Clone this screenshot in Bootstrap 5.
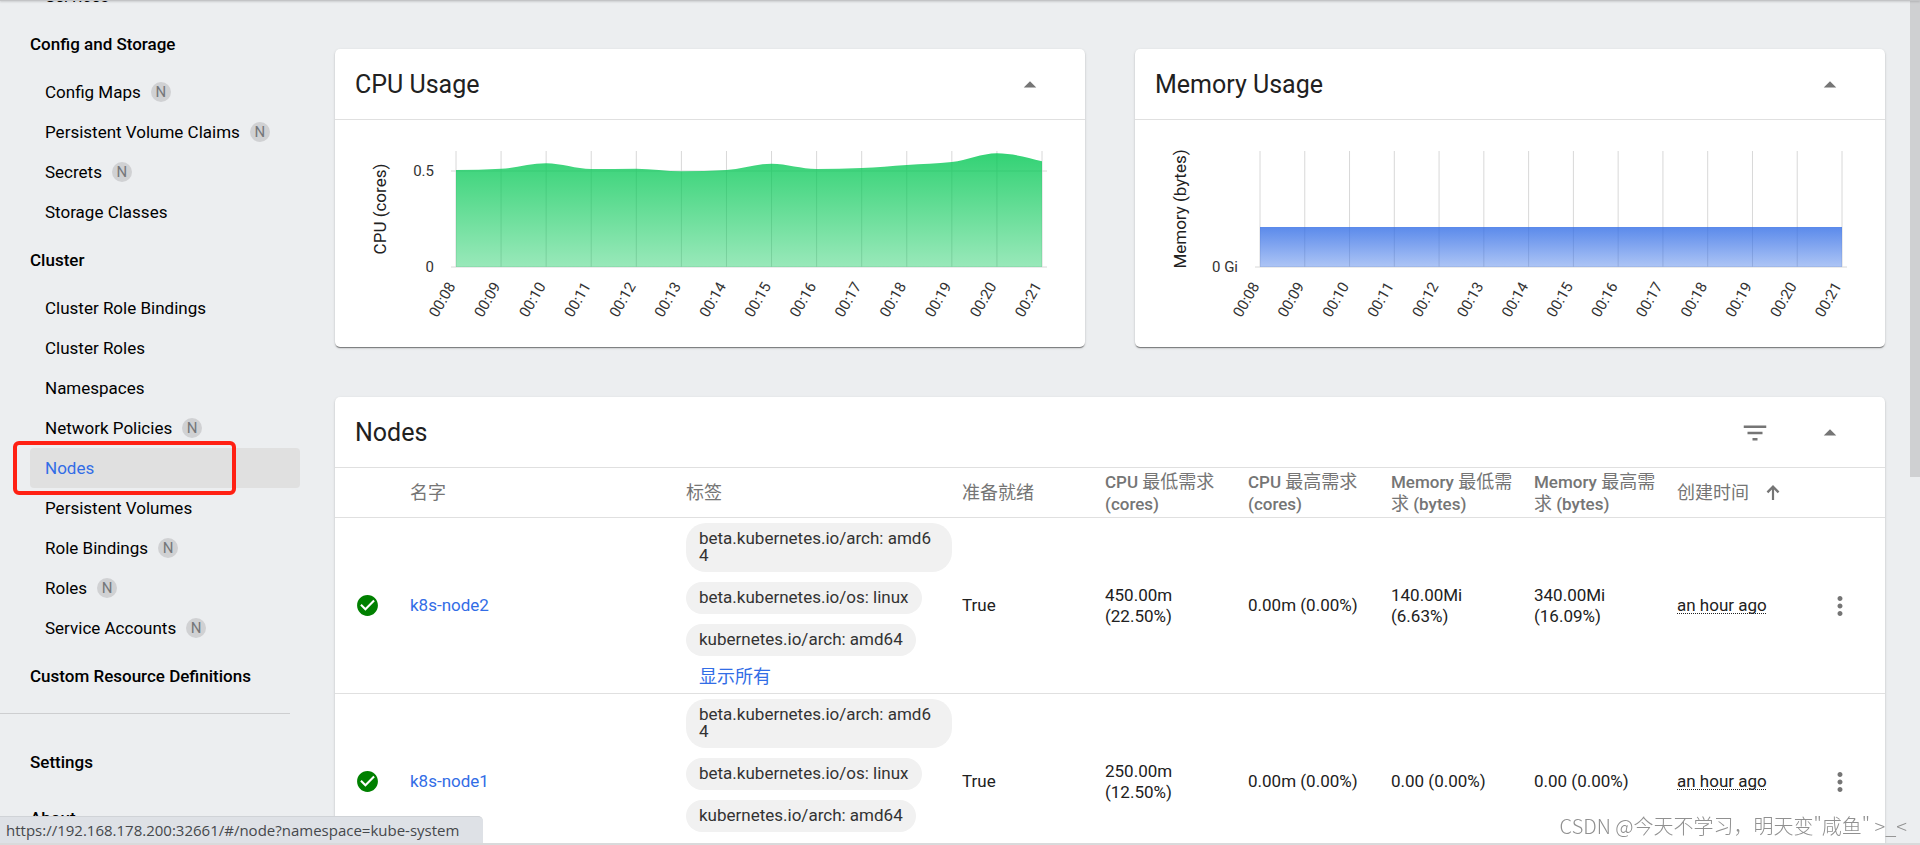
<!DOCTYPE html>
<html lang="zh-CN">
<head>
<meta charset="utf-8">
<meta name="viewport" content="width=device-width, initial-scale=1">
<title>Nodes - Kubernetes Dashboard</title>
<link rel="stylesheet" href="https://cdn.jsdelivr.net/npm/bootstrap@5.3.0/dist/css/bootstrap.min.css">
<style>
  body { background: #eceef0; color: #212121; font: 400 18px/21px Roboto, "Noto Sans CJK SC", sans-serif; }
  a { color: #326de6; text-decoration: none; }
  .toolbar-edge { height: 1px; background: #c3c4c6; box-shadow: 0 1px 2px rgba(0,0,0,.2); z-index: 3; }

  .sidenav { width: 300px; }
  .sidenav-scroll { margin-top: -24px; }
  .side-item { height: 40px; margin-left: 30px; padding-left: 15px; border-radius: 4px; color: #000; font-size: 17px; }
  .side-item.current { background: #e0e0e0; color: #326de6; }
  .side-head { height: 56px; padding: 1px 0 0 30px; color: #000; font-size: 17px; font-weight: 500; }
  .ns-mark { width: 20px; height: 20px; margin-left: 10px; border-radius: 50%; background: #d0d1d3; color: #75777a; font-size: 15px; line-height: 20px; text-align: center; }
  .side-rule { height: 1px; margin: 9px 10px 20px 0; background: #cdced0; }
  .highlight { left: -17px; top: -7px; width: 223px; height: 54px; border: 4px solid #ff2013; border-radius: 6px; }

  .content { padding: 49px 25px 0 35px; min-width: 0; }
  .panel { background: #fff; border-radius: 5px; box-shadow: 0 2px 1px -1px rgba(0,0,0,.3), 0 1px 1px rgba(0,0,0,.2), 0 1px 3px rgba(0,0,0,.14); }
  .panel-head { height: 71px; padding: 2px 40px 0 20px; border-bottom: 1px solid #e0e0e0; gap: 45px; }
  .panel-head h2 { margin: 0; font-size: 25px; line-height: 30px; font-weight: 400; color: #212121; }
  .charts { gap: 50px; margin-bottom: 50px; }
  .charts svg { width: 100%; height: auto; }
  .charts .icon-btn svg { width: 30px; }
  .charts text { fill: #333; font-size: 15px; }
  .charts .axis-title { fill: #212121; font-size: 17px; }
  .icon-btn { width: 30px; height: 30px; padding: 0; border: 0; background: none; color: #757575; }
  .icon-btn svg, .th-arrow { display: block; fill: currentColor; }

  .grid-table tr { display: grid; grid-template-columns: 75px 276fr 276fr repeat(6, 143fr) 65px; border-bottom: 1px solid #e0e0e0; }
  .grid-table th, .grid-table td { display: flex; align-items: center; padding: 0 10px 0 0; min-width: 0; font-size: 17px; }
  .grid-table td { padding-right: 14px; }
  .grid-table thead tr { height: 50px; }
  .grid-table th { color: #757575; font-weight: 500; line-height: 22px; }
  .grid-table .first { padding-left: 20px; }
  .grid-table .last { padding: 0 0 0 5px; }
  .grid-table .tags { padding: 5px 10px 5px 0; }
  .tag-list { gap: 10px; }
  .tag { padding: 7px 13px 8px; border-radius: 20px; background: #f1f1f1; color: #333; line-height: 17px; word-break: break-all; }
  .tag-more { padding: 0 13px; line-height: 22px; }
  .grid-table .zh { font-size: 18px; font-weight: 400; }
  .ago { text-decoration: underline dotted 1px; text-underline-offset: 2px; text-decoration-skip-ink: none; }

  .scroll-track { width: 10px; }
  .scroll-thumb { height: 477px; background: #cfd0d2; }
  .status { left: 0; bottom: 2px; height: 27px; padding: 0 24px 0 6px; background: #dee1e6; border-top: 1px solid #d0d3d7; border-radius: 0 5px 0 0; color: #45484c; font: 15px/26px "Open Sans", sans-serif; z-index: 5; }
  .bottom-edge { height: 2px; background: #d9dadb; z-index: 4; }
  .watermark { right: 13px; bottom: 5px; color: #909090; font: 300 20px/28px "Noto Sans CJK SC", sans-serif; z-index: 4; }
</style>
</head>
<body class="vh-100 overflow-hidden d-flex">
<div class="toolbar-edge fixed-top"></div>

<nav class="sidenav flex-shrink-0 overflow-hidden" aria-label="Resources">
  <div class="sidenav-scroll">
    <a href="#" class="side-item d-flex align-items-center">Services</a>
    <a href="#" class="side-head d-flex align-items-center">Config and Storage</a>
    <a href="#" class="side-item d-flex align-items-center">Config Maps<span class="ns-mark">N</span></a>
    <a href="#" class="side-item d-flex align-items-center">Persistent Volume Claims<span class="ns-mark">N</span></a>
    <a href="#" class="side-item d-flex align-items-center">Secrets<span class="ns-mark">N</span></a>
    <a href="#" class="side-item d-flex align-items-center">Storage Classes</a>
    <a href="#" class="side-head d-flex align-items-center">Cluster</a>
    <a href="#" class="side-item d-flex align-items-center">Cluster Role Bindings</a>
    <a href="#" class="side-item d-flex align-items-center">Cluster Roles</a>
    <a href="#" class="side-item d-flex align-items-center">Namespaces</a>
    <a href="#" class="side-item d-flex align-items-center">Network Policies<span class="ns-mark">N</span></a>
    <a href="#" class="side-item current position-relative d-flex align-items-center" aria-current="page">Nodes<span class="highlight position-absolute"></span></a>
    <a href="#" class="side-item d-flex align-items-center">Persistent Volumes</a>
    <a href="#" class="side-item d-flex align-items-center">Role Bindings<span class="ns-mark">N</span></a>
    <a href="#" class="side-item d-flex align-items-center">Roles<span class="ns-mark">N</span></a>
    <a href="#" class="side-item d-flex align-items-center">Service Accounts<span class="ns-mark">N</span></a>
    <a href="#" class="side-head d-flex align-items-center">Custom Resource Definitions</a>
    <div class="side-rule"></div>
    <a href="#" class="side-head d-flex align-items-center">Settings</a>
    <a href="#" class="side-head d-flex align-items-center">About</a>
  </div>
</nav>

<main class="content flex-grow-1">
  <div class="charts d-flex">
    <section class="panel col">
      <header class="panel-head d-flex align-items-center justify-content-between">
        <h2>CPU Usage</h2>
        <button class="icon-btn" aria-label="Collapse"><svg width="30" height="30" viewBox="0 0 24 24"><path d="M7 14l5-5 5 5z"/></svg></button>
      </header>
      <svg class="d-block" id="cpu-chart" viewBox="0 0 750 227" role="img" aria-label="CPU usage"></svg>
    </section>
    <section class="panel col">
      <header class="panel-head d-flex align-items-center justify-content-between">
        <h2>Memory Usage</h2>
        <button class="icon-btn" aria-label="Collapse"><svg width="30" height="30" viewBox="0 0 24 24"><path d="M7 14l5-5 5 5z"/></svg></button>
      </header>
      <svg class="d-block" id="mem-chart" viewBox="0 0 750 227" role="img" aria-label="Memory usage"></svg>
    </section>
  </div>

  <section class="panel">
    <header class="panel-head d-flex align-items-center">
      <h2 class="me-auto">Nodes</h2>
      <button class="icon-btn" aria-label="Filter"><svg width="30" height="30" viewBox="0 0 24 24"><path d="M10 18h4v-2h-4v2zM3 6v2h18V6H3zm3 7h12v-2H6v2z"/></svg></button>
      <button class="icon-btn" aria-label="Collapse"><svg width="30" height="30" viewBox="0 0 24 24"><path d="M7 14l5-5 5 5z"/></svg></button>
    </header>
    <table class="grid-table d-block w-100">
      <thead class="d-block">
        <tr>
          <th></th>
          <th class="zh">名字</th>
          <th class="zh">标签</th>
          <th class="zh">准备就绪</th>
          <th><div>CPU <span class="zh">最低需求</span> (cores)</div></th>
          <th><div>CPU <span class="zh">最高需求</span> (cores)</div></th>
          <th><div>Memory <span class="zh">最低需求</span> (bytes)</div></th>
          <th><div>Memory <span class="zh">最高需求</span> (bytes)</div></th>
          <th class="zh">创建时间<svg class="th-arrow ms-3" width="16" height="18" viewBox="0 0 16 18"><path d="M6.900 16V5.600L3.300 9.200 1.600 7.500 8 1l6.400 6.500-1.700 1.700-3.600-3.600V16z"/></svg></th>
          <th></th>
        </tr>
      </thead>
      <tbody class="d-block">
        <tr>
          <td class="first"><svg width="25" height="25" viewBox="0 0 24 24" fill="#008000"><path d="M12 2C6.48 2 2 6.48 2 12s4.480 10 10 10 10-4.480 10-10S17.520 2 12 2zm-2 15l-5-5 1.410-1.410L10 14.170l7.590-7.590L19 8l-9 9z"/></svg></td>
          <td><a href="#">k8s-node2</a></td>
          <td class="tags"><div class="tag-list d-flex flex-column align-items-start">
            <span class="tag">beta.kubernetes.io/arch: amd64</span>
            <span class="tag">beta.kubernetes.io/os: linux</span>
            <span class="tag">kubernetes.io/arch: amd64</span>
            <a href="#" class="tag-more zh">显示所有</a>
          </div></td>
          <td>True</td>
          <td>450.00m (22.50%)</td>
          <td>0.00m (0.00%)</td>
          <td>140.00Mi (6.63%)</td>
          <td>340.00Mi (16.09%)</td>
          <td><span class="ago">an hour ago</span></td>
          <td class="last"><button class="icon-btn" aria-label="More"><svg width="30" height="30" viewBox="0 0 24 24"><path d="M12 8c1.100 0 2-.9 2-2s-.9-2-2-2-2 .9-2 2 .9 2 2 2zm0 2c-1.100 0-2 .9-2 2s.9 2 2 2 2-.9 2-2-.9-2-2-2zm0 6c-1.100 0-2 .9-2 2s.9 2 2 2 2-.9 2-2-.9-2-2-2z"/></svg></button></td>
        </tr>
        <tr>
          <td class="first"><svg width="25" height="25" viewBox="0 0 24 24" fill="#008000"><path d="M12 2C6.48 2 2 6.48 2 12s4.480 10 10 10 10-4.480 10-10S17.520 2 12 2zm-2 15l-5-5 1.410-1.410L10 14.170l7.590-7.590L19 8l-9 9z"/></svg></td>
          <td><a href="#">k8s-node1</a></td>
          <td class="tags"><div class="tag-list d-flex flex-column align-items-start">
            <span class="tag">beta.kubernetes.io/arch: amd64</span>
            <span class="tag">beta.kubernetes.io/os: linux</span>
            <span class="tag">kubernetes.io/arch: amd64</span>
            <a href="#" class="tag-more zh">显示所有</a>
          </div></td>
          <td>True</td>
          <td>250.00m (12.50%)</td>
          <td>0.00m (0.00%)</td>
          <td>0.00 (0.00%)</td>
          <td>0.00 (0.00%)</td>
          <td><span class="ago">an hour ago</span></td>
          <td class="last"><button class="icon-btn" aria-label="More"><svg width="30" height="30" viewBox="0 0 24 24"><path d="M12 8c1.100 0 2-.9 2-2s-.9-2-2-2-2 .9-2 2 .9 2 2 2zm0 2c-1.100 0-2 .9-2 2s.9 2 2 2 2-.9 2-2-.9-2-2-2zm0 6c-1.100 0-2 .9-2 2s.9 2 2 2 2-.9 2-2-.9-2-2-2z"/></svg></button></td>
        </tr>
      </tbody>
    </table>
  </section>
</main>

<div class="scroll-track flex-shrink-0"><div class="scroll-thumb"></div></div>
<div class="bottom-edge fixed-bottom"></div>
<div class="status position-fixed">https://192.168.178.200:32661/#/node?namespace=kube-system</div>
<div class="watermark position-fixed">CSDN @今天不学习，明天变"咸鱼" &gt;_&lt;</div>

<script src="https://cdn.jsdelivr.net/npm/bootstrap@5.3.0/dist/js/bootstrap.bundle.min.js"></script>
<script>
  // Area chart with one point per minute, 00:08 to 00:21
  function drawChart(id, o) {
    const n = o.ys.length, step = (o.x1 - o.x0) / (n - 1), base = 147;
    const px = i => o.x0 + i * step;
    const slope = o.ys.map((y, i) => {
      if (i === 0 || i === n - 1) return 0;
      const a = y - o.ys[i - 1], b = o.ys[i + 1] - y;
      return a * b <= 0 ? 0 : 2 * a * b / (a + b);
    });
    slope[n - 1] = (o.ys[n - 1] - o.ys[n - 2]) * 1.4;
    let s = `<defs><linearGradient id="${id}-fill" x1="0" y1="0" x2="0" y2="1">
      <stop offset="0" stop-color="${o.color}" stop-opacity=".8"/><stop offset="1" stop-color="${o.color}" stop-opacity=".4"/></linearGradient></defs>`;
    s += '<g stroke="#d8d8d8">';
    for (let i = 0; i < n; i++) s += `<path d="M${px(i)} 31V${base}"/>`;
    o.rows.forEach(r => s += `<path d="M${o.x0 - 5} ${r[1]}H${o.x1 + 5}"/>`);
    s += '</g>';
    let d = `M${o.x0} ${base}V${o.ys[0]}`;
    for (let i = 1; i < n; i++)
      d += `C${px(i - 1) + step / 3} ${o.ys[i - 1] + slope[i - 1] / 3} ${px(i) - step / 3} ${o.ys[i] - slope[i] / 3} ${px(i)} ${o.ys[i]}`;
    s += `<path d="${d}V${base}Z" fill="url(#${id}-fill)"/>`;
    o.rows.forEach(r => s += `<text x="${o.x0 - 22}" y="${r[1] + 5}" text-anchor="end">${r[0]}</text>`);
    for (let i = 0; i < n; i++)
      s += `<text transform="translate(${px(i)} 166) rotate(-60)" text-anchor="end">00:${String(i + 8).padStart(2, '0')}</text>`;
    s += `<text class="axis-title" transform="translate(51 89) rotate(-90)" text-anchor="middle">${o.title}</text>`;
    document.getElementById(id).innerHTML = s;
  }
  drawChart('cpu-chart', { x0: 121, x1: 707, color: '#00c752', title: 'CPU (cores)',
    rows: [['0.5', 51], ['0', 147]], ys: [50, 48.7, 43.3, 49, 48.7, 51.3, 50, 43.7, 49, 48, 45, 42, 33.3, 41.3] });
  drawChart('mem-chart', { x0: 125, x1: 707, color: '#326de6', title: 'Memory (bytes)',
    rows: [['0 Gi', 147]], ys: Array(14).fill(107) });
</script>
</body>
</html>
